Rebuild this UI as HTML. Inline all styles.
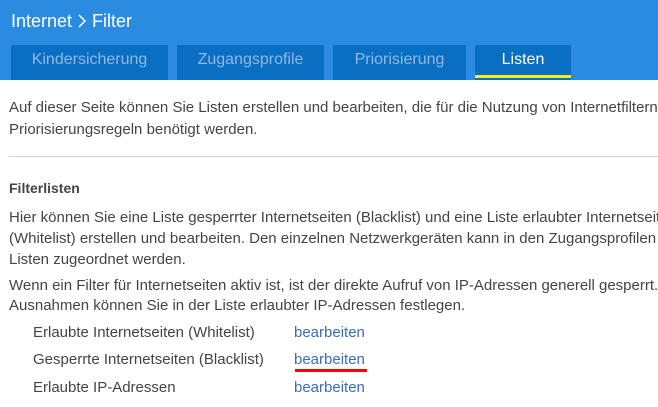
<!DOCTYPE html>
<html><head><meta charset="utf-8"><style>
*{margin:0;padding:0;box-sizing:border-box}
body{width:658px;height:407px;overflow:hidden;background:#fff;font-family:"Liberation Sans",sans-serif;color:#444;font-size:15px}
#w{position:relative;width:658px;height:407px;overflow:hidden}
.hdr{position:absolute;left:0;top:0;width:658px;height:80px;background:#2a8be0}
.title{position:absolute;left:11px;top:11px;color:#fff;font-size:18px;white-space:nowrap}
.tab{position:absolute;top:45px;height:35px;background:#0a6fc2;color:#8fb8e4;font-size:16px;text-align:center;line-height:30px}
.tab.act{color:#fff}
.tab.act:after{content:"";position:absolute;left:0;right:0;top:30px;height:3px;background:#f2ef1a}
.t{position:absolute;left:9px;white-space:nowrap}
.hr{position:absolute;left:9px;right:0;top:156px;height:1px;background:#d4d4d4}
.l{position:absolute;left:33px}
.a{position:absolute;left:294px;color:#3a6db8}
</style></head><body><div id="w">
<div class="hdr">
<div class="title">Internet <svg width="10" height="16" viewBox="0 0 10 16" style="vertical-align:-2px"><path d="M2 2 L8 8 L2 14" fill="none" stroke="#fff" stroke-width="1.5"/></svg> Filter</div>
<div class="tab" style="left:11px;width:157px">Kindersicherung</div>
<div class="tab" style="left:177px;width:147px">Zugangsprofile</div>
<div class="tab" style="left:333px;width:133px">Priorisierung</div>
<div class="tab act" style="left:475px;width:96px">Listen</div>
</div>
<div class="t" style="top:99px">Auf dieser Seite können Sie Listen erstellen und bearbeiten, die für die Nutzung von Internetfiltern</div>
<div class="t" style="top:121px">Priorisierungsregeln benötigt werden.</div>
<div class="hr"></div>
<div class="t" style="top:180px;font-weight:bold;font-size:14px">Filterlisten</div>
<div class="t" style="top:209px">Hier können Sie eine Liste gesperrter Internetseiten (Blacklist) und eine Liste erlaubter Internetseiten</div>
<div class="t" style="top:230px">(Whitelist) erstellen und bearbeiten. Den einzelnen Netzwerkgeräten kann in den Zugangsprofilen</div>
<div class="t" style="top:251px">Listen zugeordnet werden.</div>
<div class="t" style="top:277px">Wenn ein Filter für Internetseiten aktiv ist, ist der direkte Aufruf von IP-Adressen generell gesperrt.</div>
<div class="t" style="top:297px">Ausnahmen können Sie in der Liste erlaubter IP-Adressen festlegen.</div>
<div class="l" style="top:324px">Erlaubte Internetseiten (Whitelist)</div><div class="a" style="top:324px">bearbeiten</div>
<div class="l" style="top:351px">Gesperrte Internetseiten (Blacklist)</div><div class="a" style="top:351px">bearbeiten</div>
<div style="position:absolute;left:295px;top:369px;width:72px;height:3px;background:#f00"></div>
<div class="l" style="top:379px">Erlaubte IP-Adressen</div><div class="a" style="top:379px">bearbeiten</div>
</div></body></html>
